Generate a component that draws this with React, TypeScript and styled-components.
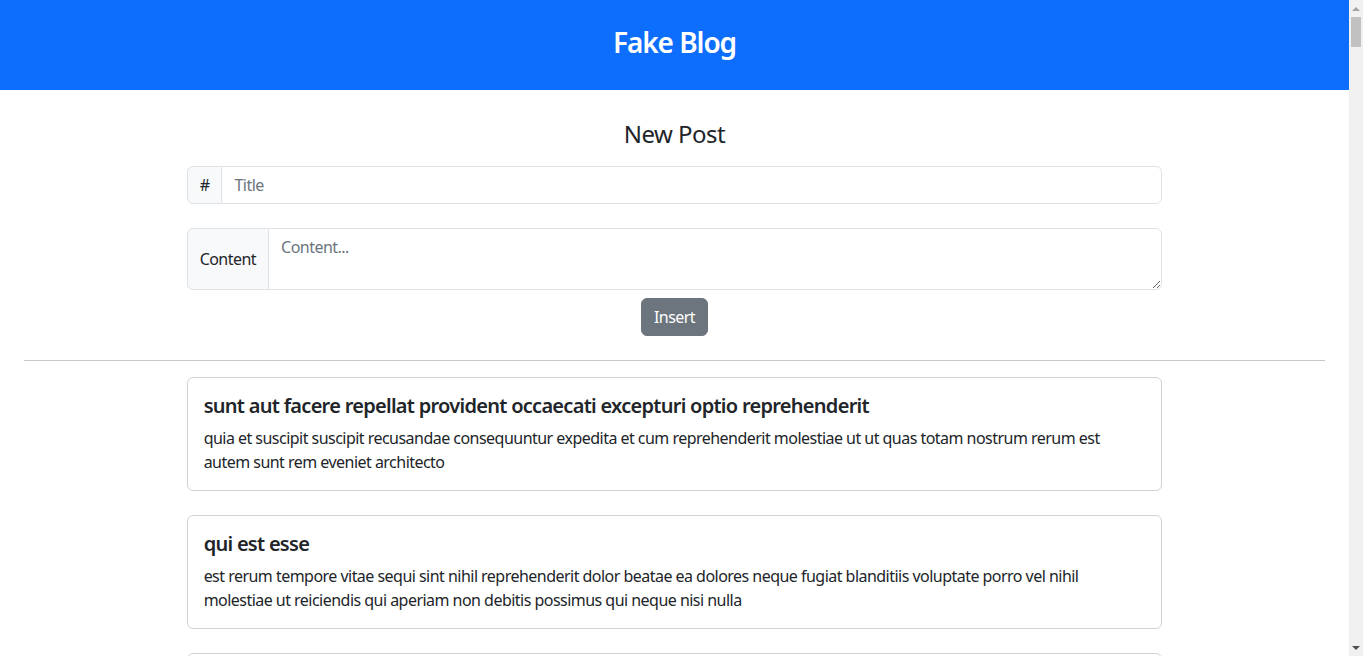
import styled, { createGlobalStyle } from "styled-components";
import { useState } from "react";

type Post = {
  id: number;
  title: string;
  body: string;
};

const initialPosts: Post[] = [
  {
    id: 1,
    title:
      "sunt aut facere repellat provident occaecati excepturi optio reprehenderit",
    body: "quia et suscipit suscipit recusandae consequuntur expedita et cum reprehenderit molestiae ut ut quas totam nostrum rerum est autem sunt rem eveniet architecto",
  },
  {
    id: 2,
    title: "qui est esse",
    body: "est rerum tempore vitae sequi sint nihil reprehenderit dolor beatae ea dolores neque fugiat blanditiis voluptate porro vel nihil molestiae ut reiciendis qui aperiam non debitis possimus qui neque nisi nulla",
  },
  {
    id: 3,
    title: "ea molestias quasi exercitationem repellat qui ipsa sit aut",
    body: "et iusto sed quo iure voluptatem occaecati omnis eligendi aut ad voluptatem doloribus vel accusantium quis pariatur molestiae porro eius odio et labore et velit aut",
  },
  {
    id: 4,
    title: "eum et est occaecati",
    body: "ullam et saepe reiciendis voluptatem adipisci sit amet autem assumenda provident rerum culpa quis hic commodi nesciunt rem tenetur doloremque ipsam iure quis sunt voluptatem rerum illo velit",
  },
];

const App: React.FC = () => {
  const [title, setTitle] = useState("");
  const [content, setContent] = useState("");
  const [posts, setPosts] = useState<Post[]>(initialPosts);

  const insertPost = () => {
    if (title.trim() === "" || content.trim() === "") return;
    setPosts((prev) => [{ id: Date.now(), title, body: content }, ...prev]);
    setTitle("");
    setContent("");
  };

  return (
    <>
      <GlobalStyle />
      <Header>
        <Brand>Fake Blog</Brand>
      </Header>
      <Main>
        <Column>
          <FormTitle>New Post</FormTitle>
          <InputGroup>
            <Addon>#</Addon>
            <TextInput
              value={title}
              onChange={(e) => setTitle(e.target.value)}
              placeholder="Title"
            />
          </InputGroup>
          <InputGroup $tight>
            <Addon>Content</Addon>
            <TextArea
              value={content}
              onChange={(e) => setContent(e.target.value)}
              placeholder="Content..."
              rows={2}
            />
          </InputGroup>
          <Actions>
            <Button onClick={insertPost}>Insert</Button>
          </Actions>
        </Column>
        <Divider />
        <Column>
          {posts.map((post) => (
            <Card key={post.id}>
              <CardTitle>{post.title}</CardTitle>
              <CardText>{post.body}</CardText>
            </Card>
          ))}
        </Column>
      </Main>
      {/* window scrollbar */}
      <ScrollRail aria-hidden>
        <ScrollButton>
          <Arrow $up />
        </ScrollButton>
        <ScrollThumb />
        <ScrollSpacer />
        <ScrollButton>
          <Arrow />
        </ScrollButton>
      </ScrollRail>
    </>
  );
};

export default App;

const GlobalStyle = createGlobalStyle`
  * {
    box-sizing: border-box;
  }
  body {
    margin: 0;
    padding-right: 14px;
    font-family: "Noto Sans", "Open Sans", sans-serif;
    font-size: 16px;
    line-height: 1.5;
    letter-spacing: -0.033em;
    color: #212529;
    background: #fff;
  }
`;

const Header = styled.header`
  background: #0d6efd;
  padding: 26px 0 22px;
  text-align: center;
`;
const Brand = styled.h3`
  margin: 0 0 8px;
  color: #fff;
  font-size: 28px;
  font-weight: 600;
  line-height: 1.2;
  letter-spacing: -0.038em;
`;

const Main = styled.main`
  padding: 0 24px;
`;
const Column = styled.div`
  width: 75%;
  margin: 0 auto;
`;
const FormTitle = styled.h4`
  margin: 30px 0 18px;
  font-size: 24px;
  font-weight: 400;
  line-height: 1.2;
  text-align: center;
`;

//InputGroup
const InputGroup = styled.div<{ $tight?: boolean }>`
  display: flex;
  align-items: stretch;
  width: 100%;
  margin-bottom: ${({ $tight }) => ($tight ? "8px" : "24px")};
`;
const Addon = styled.span`
  display: flex;
  align-items: center;
  padding: 6px 12px;
  font-size: 16px;
  line-height: 1.5;
  color: #212529;
  background: #f8f9fa;
  border: 1px solid #dee2e6;
  border-radius: 6px 0 0 6px;
  white-space: nowrap;
`;
const TextInput = styled.input`
  flex: 1;
  min-width: 0;
  margin-left: -1px;
  padding: 6px 12px;
  font: inherit;
  letter-spacing: inherit;
  color: #212529;
  border: 1px solid #dee2e6;
  border-radius: 0 6px 6px 0;
  outline: none;
  &::placeholder {
    color: #6c757d;
  }
`;
const TextArea = styled.textarea`
  flex: 1;
  min-width: 0;
  height: 62px;
  margin: 0 0 0 -1px;
  padding: 6px 12px;
  font: inherit;
  letter-spacing: inherit;
  color: #212529;
  border: 1px solid #dee2e6;
  border-radius: 0 6px 6px 0;
  outline: none;
  resize: vertical;
  &::placeholder {
    color: #6c757d;
  }
`;

const Actions = styled.div`
  display: flex;
  justify-content: center;
`;
const Button = styled.button`
  padding: 6px 12px;
  font: inherit;
  letter-spacing: inherit;
  line-height: 1.5;
  color: #fff;
  background: #6c757d;
  border: 1px solid #6c757d;
  border-radius: 6px;
  cursor: pointer;
  &:hover {
    background: #5c636a;
  }
`;

const Divider = styled.hr`
  margin: 24px 0 16px;
  border: 0;
  border-top: 1px solid #212529;
  opacity: 0.25;
`;

//Cards
const Card = styled.div`
  padding: 16px;
  margin-bottom: 24px;
  border: 1px solid rgba(0, 0, 0, 0.175);
  border-radius: 6px;
`;
const CardTitle = styled.h5`
  margin: 0 0 8px;
  font-size: 20px;
  font-weight: 600;
  line-height: 1.2;
  letter-spacing: -0.036em;
`;
const CardText = styled.p`
  margin: 0;
`;

//Scrollbar
const ScrollRail = styled.div`
  position: fixed;
  top: 0;
  right: 0;
  width: 14px;
  height: 100vh;
  display: flex;
  flex-direction: column;
  background: #f1f1f1;
`;
const ScrollButton = styled.div`
  height: 17px;
  display: flex;
  align-items: center;
  justify-content: center;
`;
const Arrow = styled.span<{ $up?: boolean }>`
  width: 0;
  height: 0;
  border-left: 4px solid transparent;
  border-right: 4px solid transparent;
  ${({ $up }) =>
    $up
      ? "border-bottom: 4px solid #a3a3a3;"
      : "border-top: 4px solid #505050;"}
`;
const ScrollThumb = styled.div`
  height: 30px;
  margin: 0 2px;
  background: #c1c1c1;
`;
const ScrollSpacer = styled.div`
  flex: 1;
`;
